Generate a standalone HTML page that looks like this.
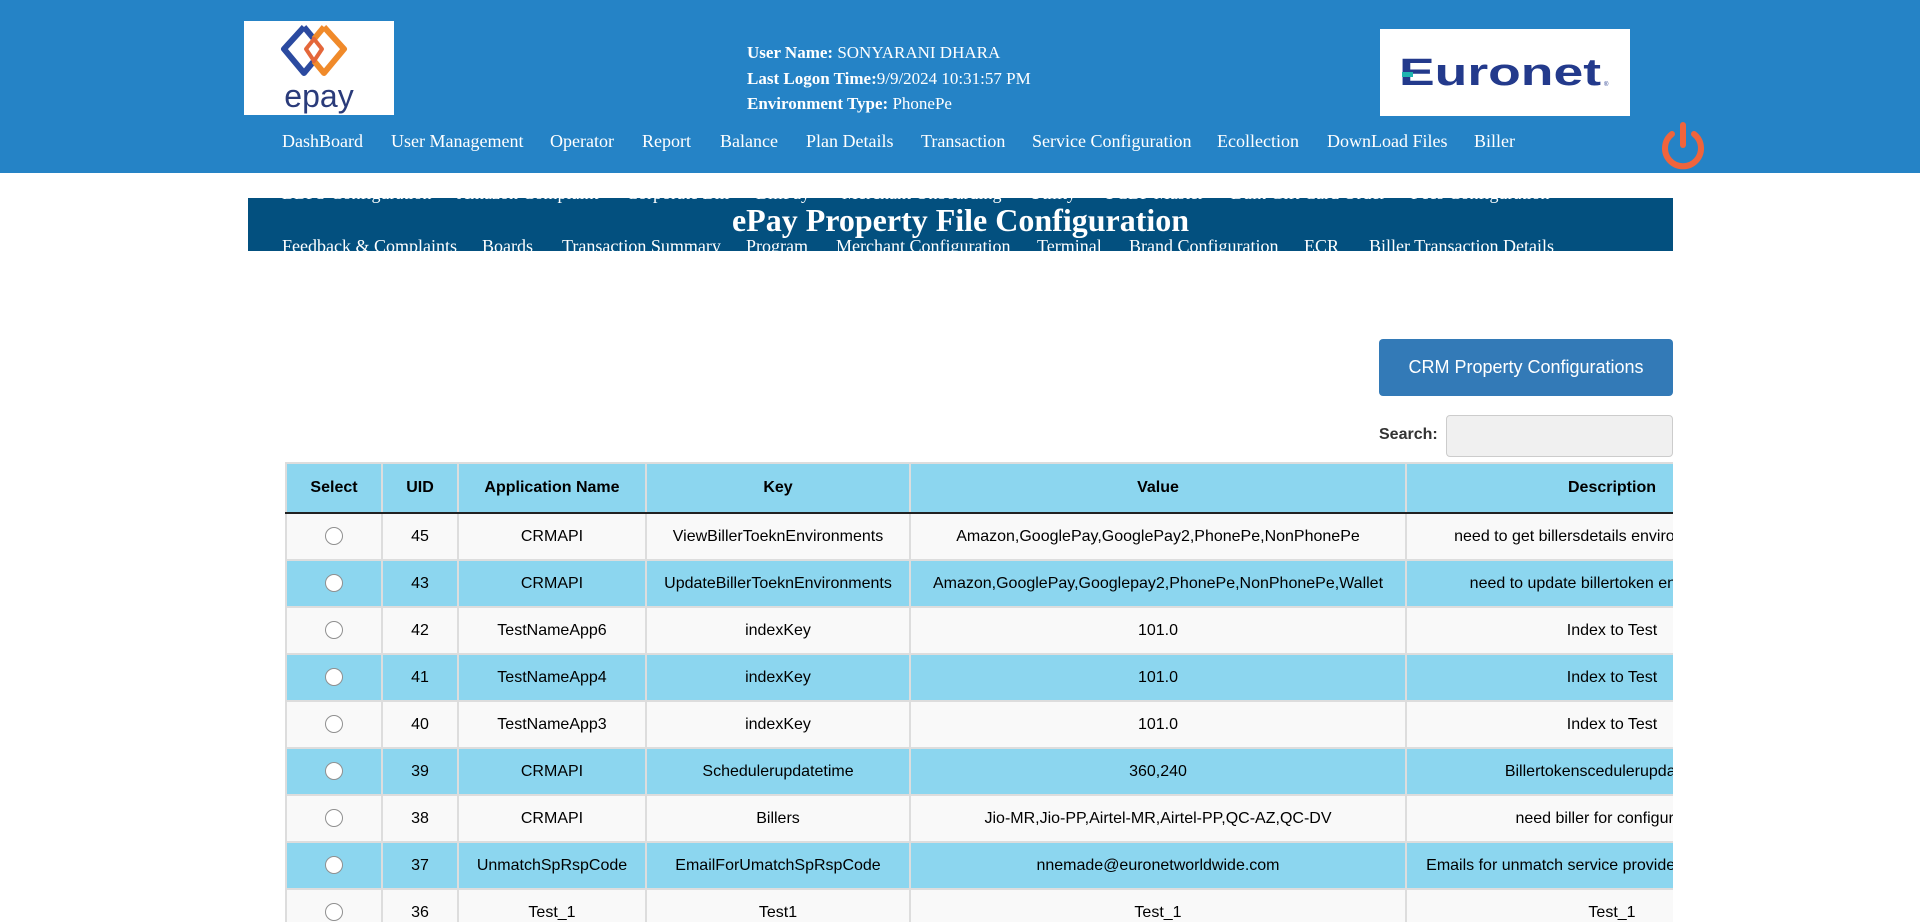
<!DOCTYPE html>
<html><head><meta charset="utf-8">
<style>
*{margin:0;padding:0;box-sizing:border-box}
body{width:1920px;height:913px;overflow:hidden;background:#fff;position:relative;font-family:"Liberation Sans",Arial,sans-serif}
.hdr{position:absolute;left:0;top:0;width:1920px;height:173px;background:#2583c6}
.logo1{position:absolute;left:244px;top:21px;width:150px;height:94px;background:#fff}
.logo2{position:absolute;left:1380px;top:29px;width:250px;height:87px;background:#fff}
.user{position:absolute;left:747px;top:40px;color:#fff;font:bold 17px "Liberation Serif",serif;line-height:25.5px}
.user span{font-weight:normal}
.nav{position:absolute;color:#fff;font:18px "Liberation Serif",serif;white-space:nowrap;line-height:52px;height:52px}
.banner{position:absolute;left:248px;top:198px;width:1425px;height:53px;background:#03507f;overflow:hidden}
.title{position:absolute;left:0;width:1425px;top:-2px;text-align:center;color:#fff;font:bold 32px "Liberation Serif",serif;line-height:48px}
.btn{position:absolute;left:1379px;top:339px;width:294px;height:57px;background:#337ab7;border-radius:4px;color:#fff;font-size:18px;text-align:center;line-height:57px}
.slab{position:absolute;left:1379px;top:426px;font-weight:bold;font-size:16px;color:#333}
.sin{position:absolute;left:1446px;top:415px;width:227px;height:42px;background:#f0f0f0;border:1px solid #ccc;border-radius:4px}
.tw{position:absolute;left:285px;top:462px;width:1388px;height:460px;overflow:hidden}
table{border-collapse:collapse;table-layout:fixed;width:1532px;font-size:16px;color:#000}
td,th{border:2px solid #ddd;text-align:center;height:47px;white-space:nowrap;overflow:hidden}
th{background:#8cd6ef;height:50px;border-bottom:2px solid #222;font-weight:bold}
tr.o td{background:#f9f9f9}
tr.e td{background:#8cd6ef}
.r{display:inline-block;width:18px;height:18px;border:1.5px solid #909090;border-radius:50%;background:#fff;vertical-align:middle}
</style></head><body>
<div class="hdr">
 <div class="logo1">
  <svg width="150" height="94" viewBox="0 0 150 94">
   <g fill="none" stroke-width="6" stroke-linejoin="round">
    <path d="M60 6 L40 28 L60 52 L70 40" stroke="#2b4aa0"/>
    <path d="M70 18 L60 6" stroke="#2b4aa0"/>
    <path d="M80 6 L100 28 L80 52 L70 40" stroke="#f08a2a"/>
    <path d="M70 18 L80 6" stroke="#f08a2a"/>
    <path d="M70 18 L62 28 L70 40 L78 28 Z" stroke="#e4673a" stroke-width="4"/>
   </g>
   <text x="75" y="86" text-anchor="middle" font-family="Liberation Sans,sans-serif" font-size="32" fill="#2a3b7a">epay</text>
  </svg>
 </div>
 <div class="user">User Name: <span>SONYARANI DHARA</span><br>Last Logon Time:<span>9/9/2024 10:31:57 PM</span><br>Environment Type: <span>PhonePe</span></div>
 <div class="logo2">
  <svg width="250" height="87" viewBox="0 0 250 87">
   <text x="19" y="56" font-family="Liberation Sans,sans-serif" font-weight="bold" font-size="38" textLength="202" lengthAdjust="spacingAndGlyphs" fill="#233a8c">Euronet</text>
   <rect x="22" y="43" width="11" height="5" fill="#1fb5b0"/>
   <text x="224" y="57" font-size="6" fill="#233a8c">®</text>
  </svg>
 </div>
 <svg style="position:absolute;left:1659px;top:120px" width="48" height="50" viewBox="0 0 48 50">
  <path d="M13 14 A18 18 0 1 0 35 14" fill="none" stroke="#f0643c" stroke-width="6" stroke-linecap="round"/>
  <line x1="24" y1="5" x2="24" y2="25" stroke="#f0643c" stroke-width="6" stroke-linecap="round"/>
 </svg>
</div>
<div class="nav" style="top:115px;left:0;width:1920px">
 <span style="position:absolute;left:282px">DashBoard</span><span style="position:absolute;left:391px">User Management</span><span style="position:absolute;left:550px">Operator</span><span style="position:absolute;left:642px">Report</span><span style="position:absolute;left:720px">Balance</span><span style="position:absolute;left:806px">Plan Details</span><span style="position:absolute;left:921px">Transaction</span><span style="position:absolute;left:1032px">Service Configuration</span><span style="position:absolute;left:1217px">Ecollection</span><span style="position:absolute;left:1327px">DownLoad Files</span><span style="position:absolute;left:1474px">Biller</span>
</div>
<div class="banner">
 <div class="nav" style="top:-31px;left:-248px;width:1920px">
  <span style="position:absolute;left:282px">BBPS Configuration</span><span style="position:absolute;left:457px">Amazon Complaint</span><span style="position:absolute;left:626px">Corporate Bill</span><span style="position:absolute;left:756px">BillPay</span><span style="position:absolute;left:842px">Merchant Onboarding</span><span style="position:absolute;left:1029px">Utility</span><span style="position:absolute;left:1103px">UCBP Master</span><span style="position:absolute;left:1231px">Bulk Gift Card Order</span><span style="position:absolute;left:1411px">Fees Configuration</span>
 </div>
 <div class="title">ePay Property File Configuration</div>
 <div class="nav" style="top:22px;left:-248px;width:1920px">
  <span style="position:absolute;left:282px">Feedback &amp; Complaints</span><span style="position:absolute;left:482px">Boards</span><span style="position:absolute;left:562px">Transaction Summary</span><span style="position:absolute;left:746px">Program</span><span style="position:absolute;left:836px">Merchant Configuration</span><span style="position:absolute;left:1037px">Terminal</span><span style="position:absolute;left:1129px">Brand Configuration</span><span style="position:absolute;left:1304px">ECR</span><span style="position:absolute;left:1369px">Biller Transaction Details</span>
 </div>
</div>
<div class="btn">CRM Property Configurations</div>
<div class="slab">Search:</div>
<div class="sin"></div>
<div class="tw">
<table>
<colgroup><col style="width:96px"><col style="width:76px"><col style="width:188px"><col style="width:264px"><col style="width:496px"><col style="width:412px"></colgroup>
<tr><th>Select</th><th>UID</th><th>Application Name</th><th>Key</th><th>Value</th><th>Description</th></tr>
<tr class="o"><td><span class="r"></span></td><td>45</td><td>CRMAPI</td><td>ViewBillerToeknEnvironments</td><td>Amazon,GooglePay,GooglePay2,PhonePe,NonPhonePe</td><td>need to get billersdetails environment details</td></tr>
<tr class="e"><td><span class="r"></span></td><td>43</td><td>CRMAPI</td><td>UpdateBillerToeknEnvironments</td><td>Amazon,GooglePay,Googlepay2,PhonePe,NonPhonePe,Wallet</td><td>need to update billertoken environments</td></tr>
<tr class="o"><td><span class="r"></span></td><td>42</td><td>TestNameApp6</td><td>indexKey</td><td>101.0</td><td>Index to Test</td></tr>
<tr class="e"><td><span class="r"></span></td><td>41</td><td>TestNameApp4</td><td>indexKey</td><td>101.0</td><td>Index to Test</td></tr>
<tr class="o"><td><span class="r"></span></td><td>40</td><td>TestNameApp3</td><td>indexKey</td><td>101.0</td><td>Index to Test</td></tr>
<tr class="e"><td><span class="r"></span></td><td>39</td><td>CRMAPI</td><td>Schedulerupdatetime</td><td>360,240</td><td>Billertokenscedulerupdatetime</td></tr>
<tr class="o"><td><span class="r"></span></td><td>38</td><td>CRMAPI</td><td>Billers</td><td>Jio-MR,Jio-PP,Airtel-MR,Airtel-PP,QC-AZ,QC-DV</td><td>need biller for configuration</td></tr>
<tr class="e"><td><span class="r"></span></td><td>37</td><td>UnmatchSpRspCode</td><td>EmailForUmatchSpRspCode</td><td>nnemade@euronetworldwide.com</td><td>Emails for unmatch service provider response codes</td></tr>
<tr class="o"><td><span class="r"></span></td><td>36</td><td>Test_1</td><td>Test1</td><td>Test_1</td><td>Test_1</td></tr>
</table>
</div>
</body></html>
